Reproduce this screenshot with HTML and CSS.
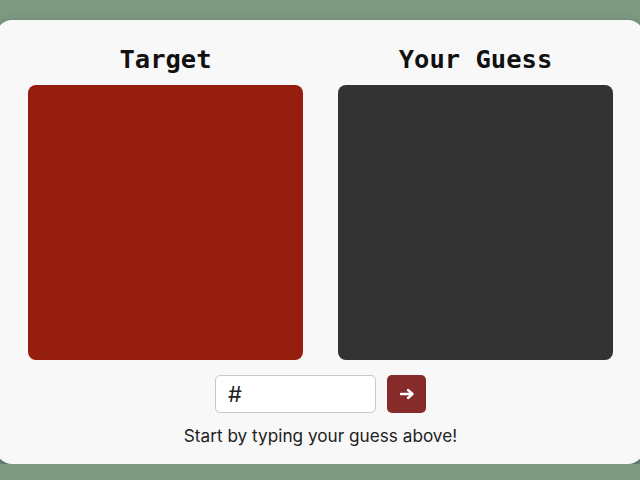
FILE: index.html
```html
<!DOCTYPE html>
<html lang="en">
<head>
    <meta charset="UTF-8">
    <meta name="viewport" content="width=device-width, initial-scale=1.0">
    <title>Guess the Color</title>
    <link rel="stylesheet" href="styles.css">
</head>
<body>
    <div class="card">
        <div class="swatches">
            <div class="column">
                <h2>Target</h2>
                <div class="swatch target"></div>
            </div>
            <div class="column">
                <h2>Your Guess</h2>
                <div class="swatch guess"></div>
            </div>
        </div>
        <form class="guess-form">
            <input type="text" id="hex" value="#" maxlength="7">
            <button type="submit" aria-label="Guess">
                <svg width="16" height="12" viewBox="0 0 16 12">
                    <path d="M2 6H13M9 2L13.5 6L9 10" fill="none" stroke="white" stroke-width="2.4" stroke-linecap="round" stroke-linejoin="round"/>
                </svg>
            </button>
        </form>
        <p class="message">Start by typing your guess above!</p>
    </div>
</body>
</html>
```

FILE: styles.css
```css
body {
    font-family: Inter, "Noto Sans", sans-serif;
    background-color: #7f9982;
    margin: 0;
    padding: 20px 0 0;
    overflow: hidden;
}
.card {
    background-color: #f8f8f8;
    border-radius: 16px;
    margin: 0 -4px 0 -4px;
    padding: 24px 31px 18px 32px;
    box-shadow: 0 6px 14px rgba(0, 0, 0, 0.35);
}
.swatches {
    display: grid;
    grid-template-columns: 275px 275px;
    column-gap: 35px;
}
.column h2 {
    font-family: "DejaVu Sans Mono", monospace;
    font-size: 25.5px;
    line-height: 30px;
    text-align: center;
    margin: 0 0 11px;
    color: #111;
}
.swatch {
    width: 275px;
    height: 275px;
    border-radius: 8px;
}
.target {
    background-color: #961e0e;
}
.guess {
    background-color: #333333;
}
.guess-form {
    display: flex;
    justify-content: center;
    gap: 11px;
    margin-top: 15px;
}
.guess-form input {
    width: 161px;
    height: 38px;
    box-sizing: border-box;
    border: 1px solid #c8c8c8;
    border-radius: 5px;
    padding: 0 12px;
    font-family: Inter, sans-serif;
    font-size: 22px;
    color: #222;
    background: white;
}
.guess-form button {
    width: 39px;
    height: 38px;
    border: none;
    border-radius: 5px;
    background-color: #862a2a;
    cursor: pointer;
    padding: 0;
    display: flex;
    align-items: center;
    justify-content: center;
}
.message {
    text-align: center;
    font-size: 17.2px;
    color: #222;
    margin: 12px 0 0;
}
```
